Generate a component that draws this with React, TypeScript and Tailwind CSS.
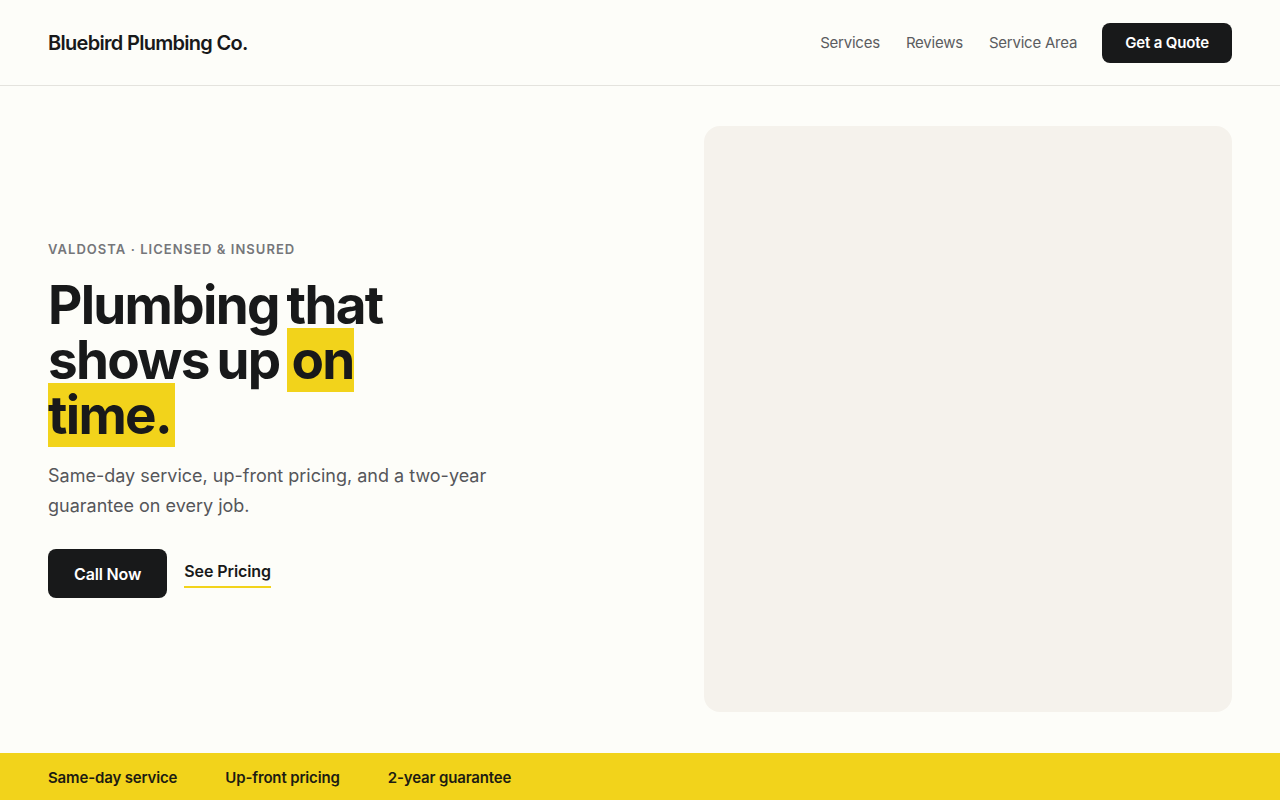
import React from 'react';

const navLinks = ['Services', 'Reviews', 'Service Area'];
const perks = ['Same-day service', 'Up-front pricing', '2-year guarantee'];

const App: React.FC = () => {
  return (
    <div
      className="min-h-screen bg-[#fdfdf9] text-[#18191a] flex flex-col"
      style={{ fontFamily: 'Inter, "Noto Sans", sans-serif' }}
    >
      {/* Header */}
      <header className="h-[86px] border-b border-[#e4e3de] px-12 flex items-center justify-between">
        <div className="text-[20px] font-semibold tracking-[-0.035em] pt-[1px]">Bluebird Plumbing Co.</div>
        <nav className="flex items-center">
          <div className="flex items-center gap-[26px] mr-[25px] pt-[2px]">
            {navLinks.map((link) => (
              <a key={link} className="text-[15px] text-[#5b5c60] tracking-[-0.015em]">
                {link}
              </a>
            ))}
          </div>
          <button className="h-10 px-[23px] rounded-lg bg-[#18191a] text-white text-[15px] font-semibold tracking-[-0.01em] pt-[1px]">
            Get a Quote
          </button>
        </nav>
      </header>

      {/* Hero */}
      <main className="px-12 py-10 grid grid-cols-[1fr_528px] gap-16">
        <div className="flex flex-col justify-center">
          <p className="text-[13px] font-semibold tracking-[0.08em] text-[#75767a] uppercase">
            Valdosta · Licensed &amp; Insured
          </p>
          <h1 className="mt-[18px] max-w-[400px] text-[53px] leading-[55px] font-bold tracking-[-0.032em] [word-spacing:-3px]">
            Plumbing that shows up{' '}
            <span className="bg-[#f2d31b] px-1">on time.</span>
          </h1>
          <p className="mt-[18px] max-w-[460px] text-[18px] leading-[30px] text-[#55565a] tracking-normal">
            Same-day service, up-front pricing, and a two-year guarantee on every job.
          </p>
          <div className="mt-[28px] flex items-center gap-4">
            <button className="h-[49px] px-[26px] rounded-lg bg-[#18191a] text-white text-[16px] font-semibold tracking-[-0.01em] pt-[1px]">
              Call Now
            </button>
            <a className="text-[16px] font-semibold tracking-[-0.005em] border-b-2 border-[#f2d31b] pb-[3px] ml-[1px]">
              See Pricing
            </a>
          </div>
        </div>
        <div className="h-[586px] rounded-2xl bg-[#f5f2ec]" />
      </main>

      {/* Perks strip */}
      <section className="mt-px bg-[#f2d31b] h-[48px] px-12 pt-1 flex items-center gap-12 flex-1">
        {perks.map((perk) => (
          <span key={perk} className="text-[15px] font-semibold tracking-[-0.01em] text-[#1d1c12]">
            {perk}
          </span>
        ))}
      </section>
    </div>
  );
};

export default App;
